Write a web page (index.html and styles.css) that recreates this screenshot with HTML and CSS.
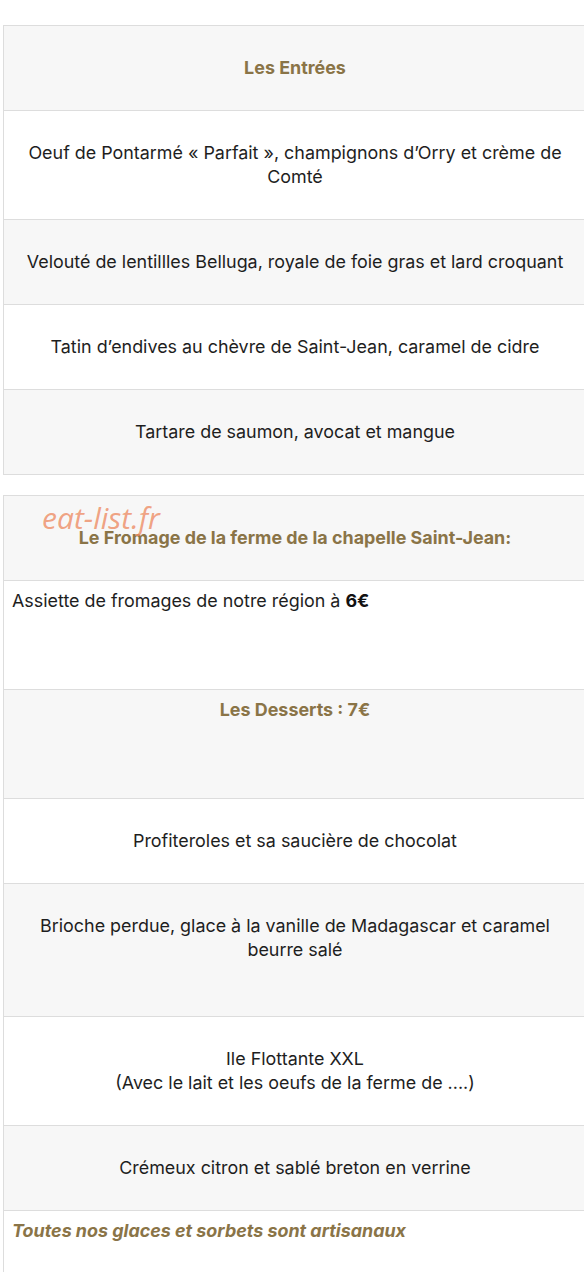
FILE: index.html
```html
<!DOCTYPE html>
<html lang="fr">
<head>
  <meta charset="UTF-8">
  <meta name="viewport" content="width=device-width, initial-scale=1.0">
  <title>La carte</title>
  <link rel="stylesheet" href="styles.css">
</head>
<body>
  <!-- Entrées -->
  <table class="carte">
    <tr class="gris">
      <td class="titre">Les Entrées</td>
    </tr>
    <tr>
      <td>Oeuf de Pontarmé « Parfait », champignons d’Orry et crème de Comté</td>
    </tr>
    <tr class="gris">
      <td>Velouté de lentillles Belluga, royale de foie gras et lard croquant</td>
    </tr>
    <tr>
      <td>Tatin d’endives au chèvre de Saint-Jean, caramel de cidre</td>
    </tr>
    <tr class="gris">
      <td>Tartare de saumon, avocat et mangue</td>
    </tr>
  </table>

  <!-- Fromage et desserts -->
  <div class="bloc">
    <span class="filigrane">eat-list.fr</span>
    <table class="carte">
      <tr class="gris">
        <td class="titre">Le Fromage de la ferme de la chapelle Saint-Jean:</td>
      </tr>
      <tr>
        <td class="note gauche">Assiette de fromages de notre région à <strong>6€</strong></td>
      </tr>
      <tr class="gris">
        <td class="note titre">Les Desserts : 7€</td>
      </tr>
      <tr>
        <td>Profiteroles et sa saucière de chocolat</td>
      </tr>
      <tr class="gris">
        <td class="vide">Brioche perdue, glace à la vanille de Madagascar et caramel beurre salé</td>
      </tr>
      <tr>
        <td>Ile Flottante XXL<br>(Avec le lait et les oeufs de la ferme de ....)</td>
      </tr>
      <tr class="gris">
        <td>Crémeux citron et sablé breton en verrine</td>
      </tr>
      <tr>
        <td class="note gauche titre italique">Toutes nos glaces et sorbets sont artisanaux</td>
      </tr>
    </table>
  </div>
</body>
</html>
```
FILE: styles.css
```css
/* Général */
body {
  margin: 0;
  padding: 0;
  background-color: #ffffff;
  font-family: Inter, "Liberation Sans", sans-serif;
  color: #1e1e1e;
  overflow-x: hidden;
}

/* Tableaux de la carte */
.carte {
  width: 584px;
  margin: 25px 0 0 3px;
  border-collapse: collapse;
  font-size: 17.9px;
  line-height: 24px;
}

.carte td {
  border: 1px solid #dddddd;
  padding: 30px 8px;
  text-align: center;
  vertical-align: top;
}

.carte tr.gris td {
  background-color: #f7f7f7;
}

.carte td.titre {
  font-weight: bold;
  color: #8a7447;
}

.carte strong {
  color: #111111;
}

/* Lignes avec texte en haut */
.carte td.note {
  padding-top: 8px;
  padding-bottom: 76px;
}

.carte td.gauche {
  text-align: left;
}

.carte td.italique {
  font-style: italic;
}

/* Ligne avec une ligne vide en bas */
.carte td.vide {
  padding-bottom: 54px;
}

/* Deuxième tableau */
.bloc {
  position: relative;
  margin-top: 20px;
}

.bloc .carte {
  margin-top: 0;
}

/* Filigrane du site */
.filigrane {
  position: absolute;
  top: 8px;
  left: 42px;
  font-family: "Open Sans", sans-serif;
  font-style: italic;
  font-size: 30px;
  line-height: 30px;
  color: rgba(238, 140, 100, 0.8);
  z-index: 10;
}
```
